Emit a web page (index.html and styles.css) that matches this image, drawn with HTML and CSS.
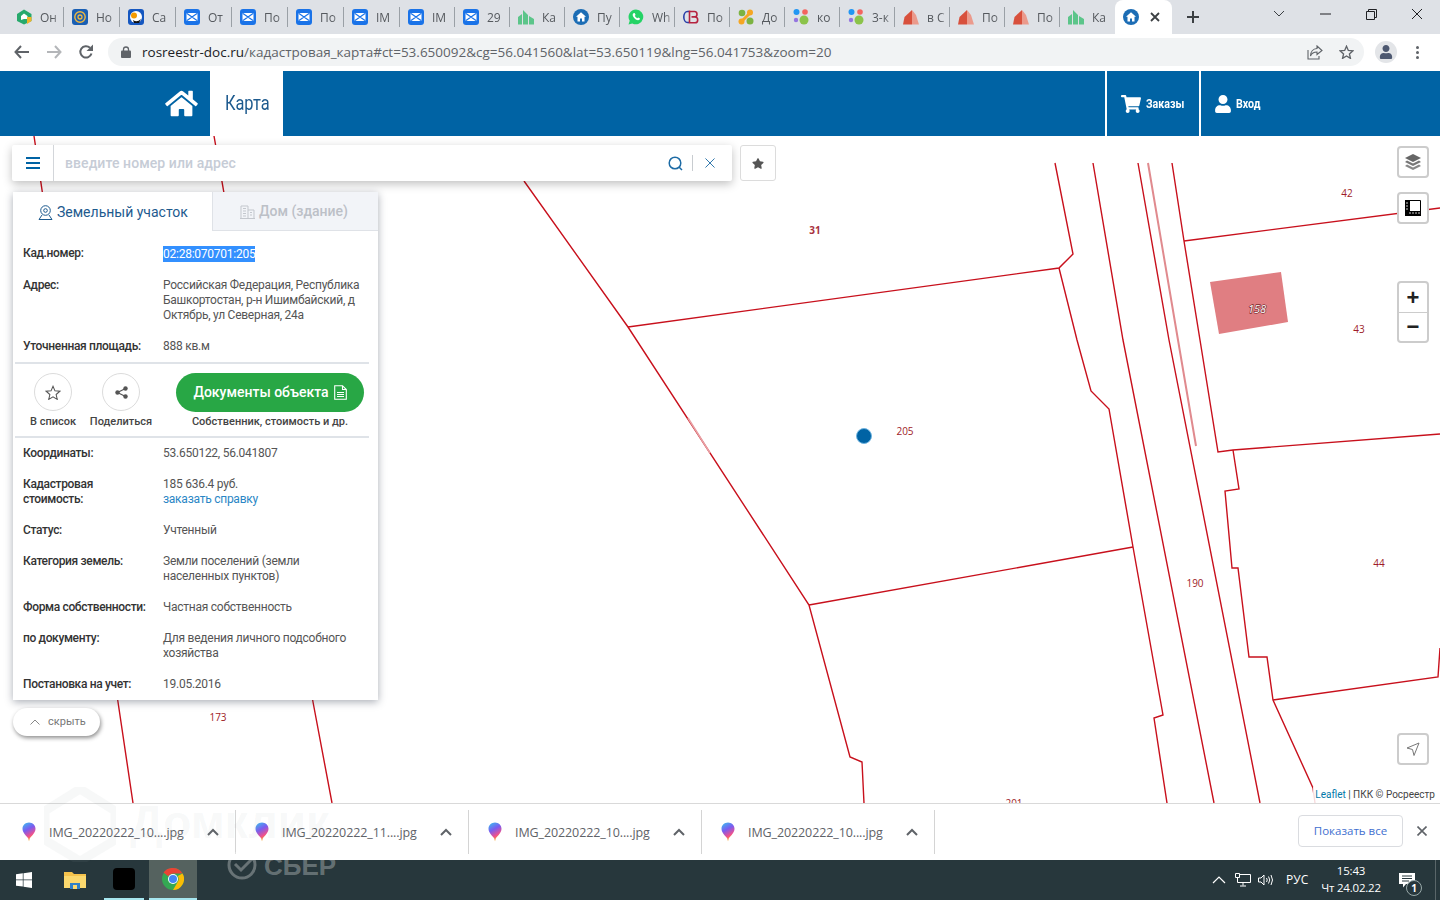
FILE: index.html
```html
<!DOCTYPE html>
<html lang="ru">
<head>
<meta charset="utf-8">
<title>Кадастровая карта</title>
<link rel="stylesheet" href="styles.css">
</head>
<body>
<svg class="defs" width="0" height="0" aria-hidden="true">
  <defs>
    <linearGradient id="balloon" x1="0" y1="0" x2="0.4" y2="1">
      <stop offset="0" stop-color="#35c6f0"/><stop offset="0.45" stop-color="#7a5cf0"/><stop offset="0.8" stop-color="#f0508c"/><stop offset="1" stop-color="#f7a020"/>
    </linearGradient>
    <symbol id="f-dom" viewBox="0 0 16 16"><path d="M8 0.5 15.5 5v7L8 15.5 1 12V5z" fill="#27a96c"/><path d="M8 4.5 11.5 7v3H8L5 11V7z" fill="#fff"/><path d="M11 8h4.5v4L11 15z" fill="#f0b429"/></symbol>
    <symbol id="f-at" viewBox="0 0 16 16"><rect width="16" height="16" rx="3" fill="#1a5fb4"/><circle cx="8" cy="8" r="5.2" fill="none" stroke="#f0b840" stroke-width="1.4"/><circle cx="8" cy="8" r="2" fill="none" stroke="#f0b840" stroke-width="1.3"/></symbol>
    <symbol id="f-sa" viewBox="0 0 16 16"><rect width="16" height="16" rx="3" fill="#1557c0"/><circle cx="8" cy="8" r="6" fill="#fff"/><circle cx="6" cy="6.5" r="3" fill="#f59b00"/><path d="M5 11q4 3 8-1l-2 4H6z" fill="#111"/></symbol>
    <symbol id="f-mail" viewBox="0 0 16 16"><rect width="16" height="16" rx="3" fill="#1a73e8"/><rect x="2.5" y="4" width="11" height="8" rx="1" fill="#fff"/><path d="M3 4.5 8 8l5-3.500M3 11.500 8 8l5 3.500" fill="none" stroke="#1a73e8" stroke-width="1.200"/></symbol>
    <symbol id="f-bld" viewBox="0 0 16 16"><path d="M0 15.500V8l4-3v10.500zM5 15.500V1l5 5v9.500zM11 15.500V7l5 3v5.500z" fill="#5cc58a"/></symbol>
    <symbol id="f-home" viewBox="0 0 16 16"><circle cx="8" cy="8" r="8" fill="#1c6db5"/><path d="M8 3.200 13 7.800h-1.500V12.500h-2.500v-3H7v3H4.500V7.800H3z" fill="#fff"/></symbol>
    <symbol id="f-wa" viewBox="0 0 16 16"><path d="M8 0.500a7.400 7.400 0 0 0-6.300 11.300L0.500 15.500l3.800-1.100A7.400 7.400 0 1 0 8 0.500z" fill="#25d366"/><path d="M5.400 4.200c-1 .9-1 2.400.2 4 1.300 1.800 3 3 4.500 3 1 0 1.900-.8 1.900-1.700l-1.800-1-.9.800c-1-.4-2-1.400-2.500-2.500l.8-.9-.9-1.900z" fill="#fff"/></symbol>
    <symbol id="f-cb" viewBox="0 0 16 16"><path d="M6 2.500H4.500a3.700 5.500 0 0 0 0 11H6" fill="none" stroke="#2a3fa8" stroke-width="1.600"/><path d="M6.500 1.500v13M6.500 2.500h5a2.500 2.700 0 0 1 0 5.400h-3M8.500 8h3.500a2.700 2.900 0 0 1 0 5.800H6.500" fill="none" stroke="#b5223f" stroke-width="1.600"/></symbol>
    <symbol id="f-do" viewBox="0 0 16 16"><path d="M4 12 12 4" stroke="#f5a623" stroke-width="3"/><circle cx="4" cy="4" r="3.300" fill="#7cb342"/><circle cx="12" cy="3.500" r="3" fill="#f5a623"/><circle cx="3.500" cy="12.500" r="3" fill="#f5a623"/><circle cx="12" cy="12" r="3.500" fill="#7cb342"/></symbol>
    <symbol id="f-dots" viewBox="0 0 16 16"><circle cx="3.500" cy="3" r="3" fill="#2196f3"/><circle cx="12" cy="3" r="2.800" fill="#f4645f"/><circle cx="3" cy="11" r="2.200" fill="#9575e0"/><circle cx="11" cy="11" r="4.500" fill="#8bc34a"/></symbol>
    <symbol id="f-red" viewBox="0 0 16 16"><path d="M0 15.500 1.500 8 9 1v14.500z" fill="#d8503c"/><path d="M9 1l4 5 3 9.500H9z" fill="#eb9a8c"/></symbol>
    <symbol id="star" viewBox="0 0 576 512"><path d="M259.300 17.800 194 150.200 47.900 171.500c-26.200 3.800-36.700 36.100-17.700 54.600l105.700 103-25 145.500c-4.500 26.300 23.200 46 46.400 33.700L288 439.600l130.700 68.700c23.200 12.200 50.900-7.400 46.400-33.700l-25-145.500 105.700-103c19-18.500 8.500-50.800-17.700-54.600L382 150.200 316.700 17.800c-11.700-23.600-45.600-23.900-57.400 0z"/></symbol>
    <symbol id="chev" viewBox="0 0 16 16"><path d="M3 11 8 6l5 5" fill="none" stroke="#5f6368" stroke-width="2"/></symbol>
    <symbol id="dl" viewBox="0 0 14 20"><path d="M7 0.500c3.600 0 6.500 2.800 6.500 6.300 0 4-3.700 7-5.700 9.500l-.8 3-.8-3C4.200 13.800.5 10.800.5 6.800.5 3.300 3.400.5 7 .5z" fill="url(#balloon)"/></symbol>
  </defs>
</svg>

<div class="tabstrip">
  <div class="tab"><svg class="fav"><use href="#f-dom"/></svg><span class="tab-t">Он</span></div>
  <div class="tab"><svg class="fav"><use href="#f-at"/></svg><span class="tab-t">Но</span></div>
  <div class="tab"><svg class="fav"><use href="#f-sa"/></svg><span class="tab-t">Са</span></div>
  <div class="tab"><svg class="fav"><use href="#f-mail"/></svg><span class="tab-t">От</span></div>
  <div class="tab"><svg class="fav"><use href="#f-mail"/></svg><span class="tab-t">По</span></div>
  <div class="tab"><svg class="fav"><use href="#f-mail"/></svg><span class="tab-t">По</span></div>
  <div class="tab"><svg class="fav"><use href="#f-mail"/></svg><span class="tab-t">IM</span></div>
  <div class="tab"><svg class="fav"><use href="#f-mail"/></svg><span class="tab-t">IM</span></div>
  <div class="tab"><svg class="fav"><use href="#f-mail"/></svg><span class="tab-t">29</span></div>
  <div class="tab"><svg class="fav"><use href="#f-bld"/></svg><span class="tab-t">Ка</span></div>
  <div class="tab"><svg class="fav"><use href="#f-home"/></svg><span class="tab-t">Пу</span></div>
  <div class="tab"><svg class="fav"><use href="#f-wa"/></svg><span class="tab-t">Wh</span></div>
  <div class="tab"><svg class="fav"><use href="#f-cb"/></svg><span class="tab-t">По</span></div>
  <div class="tab"><svg class="fav"><use href="#f-do"/></svg><span class="tab-t">До</span></div>
  <div class="tab"><svg class="fav"><use href="#f-dots"/></svg><span class="tab-t">ко</span></div>
  <div class="tab"><svg class="fav"><use href="#f-dots"/></svg><span class="tab-t">3-к</span></div>
  <div class="tab"><svg class="fav"><use href="#f-red"/></svg><span class="tab-t">в С</span></div>
  <div class="tab"><svg class="fav"><use href="#f-red"/></svg><span class="tab-t">По</span></div>
  <div class="tab"><svg class="fav"><use href="#f-red"/></svg><span class="tab-t">По</span></div>
  <div class="tab tab-last"><svg class="fav"><use href="#f-bld"/></svg><span class="tab-t">Ка</span></div>
  <div class="tab-active">
    <svg class="fav"><use href="#f-home"/></svg>
    <svg class="tab-x" viewBox="0 0 10 10"><path d="M1 1l8 8M9 1l-8 8" stroke="#3c4043" stroke-width="1.800"/></svg>
  </div>
  <svg class="newtab" viewBox="0 0 14 14"><path d="M7 1v12M1 7h12" stroke="#3c4043" stroke-width="2"/></svg>
  <div class="winctl">
    <div class="winbtn"><svg width="12" height="8" viewBox="0 0 12 8"><path d="M1 1l5 5 5-5" fill="none" stroke="#3c4043"/></svg></div>
    <div class="winbtn"><svg width="11" height="2" viewBox="0 0 11 2"><path d="M0 1h11" stroke="#202124"/></svg></div>
    <div class="winbtn"><svg width="11" height="11" viewBox="0 0 11 11"><path d="M.5 2.500h8v8h-8zM2.500 2.500v-2h8v8h-2" fill="none" stroke="#202124"/></svg></div>
    <div class="winbtn"><svg width="12" height="12" viewBox="0 0 12 12"><path d="M1 1l10 10M11 1 1 11" stroke="#202124"/></svg></div>
  </div>
</div>

<div class="toolbar">
  <div class="navbtn"><svg width="16" height="14" viewBox="0 0 16 14"><path d="M7 1 1.500 7 7 13M1.500 7H15" fill="none" stroke="#5f6368" stroke-width="2"/></svg></div>
  <div class="navbtn"><svg width="16" height="14" viewBox="0 0 16 14"><path d="M9 1l5.500 6L9 13M14.500 7H1" fill="none" stroke="#b4b6b9" stroke-width="2"/></svg></div>
  <div class="navbtn"><svg width="16" height="16" viewBox="0 0 16 16"><path d="M13.500 9.500A5.700 5.700 0 1 1 12 3.800" fill="none" stroke="#5f6368" stroke-width="2"/><path d="M15 0.500V7H8.500z" fill="#5f6368"/></svg></div>
  <div class="omnibox">
    <svg class="lock" width="10" height="12" viewBox="0 0 10 12"><path d="M2.500 5V3.500a2.500 2.500 0 0 1 5 0V5" fill="none" stroke="#5f6368" stroke-width="1.300"/><rect y="4.500" width="10" height="7.500" rx="1" fill="#5f6368"/></svg>
    <span class="url"><span class="url-host">rosreestr-doc.ru</span>/кадастровая_карта#ct=53.650092&amp;cg=56.041560&amp;lat=53.650119&amp;lng=56.041753&amp;zoom=20</span>
    <svg class="omni-ic" width="16" height="15" viewBox="0 0 16 15"><path d="M10 1l5 4.500L10 9.500V7C6.500 7 4.500 8.500 3.500 11 3.500 7 6 3.800 10 3.500zM1 5v9h11v-3" fill="none" stroke="#5f6368" stroke-width="1.100"/></svg>
    <svg class="omni-ic omni-star" width="15" height="14" viewBox="0 0 24 23"><path d="M12 2l3 7 7.500.6-5.700 5 1.700 7.400L12 18l-6.500 4 1.700-7.400-5.700-5L9 9z" fill="none" stroke="#5f6368" stroke-width="2.200"/></svg>
  </div>
  <div class="avatar"><svg width="14" height="14" viewBox="0 0 448 512"><path fill="#4d5870" d="M224 256c70.700 0 128-57.300 128-128S294.700 0 224 0 96 57.300 96 128s57.300 128 128 128zm89.600 32h-16.700c-22.200 10.200-46.900 16-72.900 16s-50.600-5.800-72.900-16h-16.700C60.200 288 0 348.200 0 422.400V464c0 26.500 21.500 48 48 48h352c26.500 0 48-21.500 48-48v-41.600c0-74.200-60.200-134.400-134.400-134.400z"/></svg></div>
  <div class="kebab"><i></i><i></i><i></i></div>
</div>

<header class="site">
  <svg class="site-home" width="33" height="29" viewBox="0 0 576 512"><path fill="#fff" d="M280.370 148.260L96 300.110V464a16 16 0 0 0 16 16l112.060-.29a16 16 0 0 0 15.920-16V368a16 16 0 0 1 16-16h64a16 16 0 0 1 16 16v95.640a16 16 0 0 0 16 16.050L464 480a16 16 0 0 0 16-16V300L295.670 148.260a12.190 12.190 0 0 0-15.300 0zM571.600 251.470L488 182.560V44.050a12 12 0 0 0-12-12h-56a12 12 0 0 0-12 12v72.610L318.470 43a48 48 0 0 0-61 0L4.340 251.470a12 12 0 0 0-1.600 16.900l25.500 31A12 12 0 0 0 45.150 301l235.220-193.740a12.190 12.190 0 0 1 15.300 0L530.900 301a12 12 0 0 0 16.900-1.600l25.500-31a12 12 0 0 0-1.700-16.930z"/></svg>
  <div class="site-tab"><span class="site-tab-t">Карта</span></div>
  <div class="site-right">
    <div class="site-link site-orders">
      <svg width="20" height="18" viewBox="0 0 576 512"><path fill="#fff" d="M528.120 301.319l47.273-208C578.806 78.301 567.391 64 551.990 64H159.208l-9.166-44.810C147.758 8.021 137.930 0 126.529 0H24C10.745 0 0 10.745 0 24v16c0 13.255 10.745 24 24 24h69.883l70.248 343.435C147.325 417.100 136 435.222 136 456c0 30.928 25.072 56 56 56s56-25.072 56-56c0-15.674-6.447-29.835-16.824-40h209.647C430.447 426.165 424 440.326 424 456c0 30.928 25.072 56 56 56s56-25.072 56-56c0-22.172-12.888-41.332-31.579-50.405l5.517-24.276c3.413-15.018-8.002-29.319-23.403-29.319H218.117l-6.545-32h293.145c11.206 0 20.920-7.754 23.403-18.681z"/></svg>
      <span class="site-link-t">Заказы</span>
    </div>
    <div class="site-link site-login">
      <svg width="16" height="18" viewBox="0 0 448 512"><path fill="#fff" d="M224 256c70.700 0 128-57.300 128-128S294.700 0 224 0 96 57.300 96 128s57.300 128 128 128zm89.600 32h-16.700c-22.200 10.200-46.900 16-72.900 16s-50.600-5.800-72.900-16h-16.700C60.200 288 0 348.200 0 422.400V464c0 26.500 21.500 48 48 48h352c26.500 0 48-21.500 48-48v-41.600c0-74.200-60.200-134.400-134.400-134.400z"/></svg>
      <span class="site-link-t">Вход</span>
    </div>
  </div>
</header>

<main class="map">
  <svg class="plan" viewBox="0 136 1440 667" width="1440" height="667">
    <g class="ln">
      <path d="M34 136 118 702 133 803"/>
      <path d="M214 136 313 702 332 803"/>
      <path d="M524 181 628 327 809 605 850 757 862 762 864 803"/>
      <path d="M628 327 1059 268 1073 254 1055 163"/>
      <path d="M1059 268 1077 340 1091 391 1109 409 1133 547 1163 715 1154 718 1167 803"/>
      <path d="M809 605 1133 547"/>
      <path d="M1093 163 1123 340 1214 803"/>
      <path d="M1138 163 1169 340 1260 803"/>
      <path d="M1172 163 1184 241 1200 340 1218 452 1233 450 1440 434"/>
      <path d="M1184 241 1440 208"/>
      <path d="M1233 450 1239 489 1225 491 1232 568 1238 568 1249 657 1267 657 1273 700 1313 788 1315 803"/>
      <path d="M1273 700 1438 677 1440 648"/>
    </g>
    <path class="ln-fade" d="M688 418 710 453"/>
    <path class="ln-pale" d="M1148 163 1178 340 1196 446"/>
    <polygon class="bld" points="1210,282 1281,272 1288,322 1219,334"/>
    <g class="lbl">
      <text x="815" y="234" class="lbl-b">31</text>
      <text x="1347" y="197">42</text>
      <text x="1359" y="333">43</text>
      <text x="1379" y="567">44</text>
      <text x="1195" y="587">190</text>
      <text x="905" y="435">205</text>
      <text x="218" y="721">173</text>
      <text x="1014" y="807">201</text>
      <text x="1257" y="313" class="lbl-w">158</text>
    </g>
    <circle class="dot" cx="864" cy="436" r="7.500"/>
  </svg>

  <div class="search">
    <div class="search-menu"><i></i><i></i><i></i></div>
    <div class="search-ph">введите номер или адрес</div>
    <svg class="search-ic" width="15" height="15" viewBox="0 0 15 15"><circle cx="7" cy="7" r="5.800" fill="none" stroke="#1d6ba5" stroke-width="1.500"/><path d="M11 11l3 3" stroke="#1d6ba5" stroke-width="1.500"/></svg>
    <span class="search-sep"></span>
    <svg class="search-x" width="10" height="10" viewBox="0 0 11 11"><path d="M.5.500l10 10M10.500.500l-10 10" stroke="#1d6ba5"/></svg>
  </div>
  <div class="fav-btn"><svg width="12" height="11"><use href="#star" fill="#555"/></svg></div>

  <section class="panel">
    <div class="p-tabs">
      <div class="p-tab p-tab-on">
        <svg width="15" height="15" viewBox="0 0 15 15"><circle cx="7.500" cy="5.500" r="4.800" fill="none" stroke="#1d5a8e"/><circle cx="7.500" cy="5.500" r="1.800" fill="none" stroke="#1d5a8e"/><path d="M4 10 1 14.500h13L11 10" fill="none" stroke="#1d5a8e"/></svg>
        Земельный участок
      </div>
      <div class="p-tab p-tab-off">
        <svg width="15" height="14" viewBox="0 0 15 14"><path d="M1 13.500V1h7v12.500zM8 5h6v8.500M0 13.500h15M3 3.500h3M3 6h3M3 8.500h3M3 11h3M10 7.500h2M10 10h2" fill="none" stroke="#c3c7cd"/></svg>
        Дом (здание)
      </div>
    </div>
    <div class="p-sec p-sec-first">
      <div class="rw"><div class="k">Кад.номер:</div><div class="v"><span class="sel">02:28:070701:205</span></div></div>
      <div class="rw"><div class="k">Адрес:</div><div class="v">Российская Федерация, Республика Башкортостан, р-н Ишимбайский, д Октябрь, ул Северная, 24а</div></div>
      <div class="rw rw-end"><div class="k">Уточненная площадь:</div><div class="v">888 кв.м</div></div>
    </div>
    <div class="p-actions">
      <div class="act">
        <div class="act-c"><svg width="16" height="15" viewBox="0 0 24 23"><path d="M12 2l3 7 7.500.6-5.700 5 1.700 7.400L12 18l-6.500 4 1.700-7.400-5.700-5L9 9z" fill="none" stroke="#555" stroke-width="1.600"/></svg></div>
        <div class="act-l">В список</div>
      </div>
      <div class="act">
        <div class="act-c"><svg width="13" height="13" viewBox="0 0 13 13"><path d="M10.500 2.500 2.500 6.500l8 4" fill="none" stroke="#555" stroke-width="1.200"/><circle cx="10.500" cy="2.500" r="2.200" fill="#555"/><circle cx="2.500" cy="6.500" r="2.200" fill="#555"/><circle cx="10.500" cy="10.500" r="2.200" fill="#555"/></svg></div>
        <div class="act-l">Поделиться</div>
      </div>
      <div class="act-main">
        <div class="docs">Документы объекта
          <svg width="13" height="15" viewBox="0 0 13 15"><path d="M.7.700h7.800l3.800 3.800v9.800H.7zM8.500.700v3.800h3.800M3 7.500h7M3 9.500h7M3 11.500h7" fill="none" stroke="#fff" stroke-width="1.100"/></svg>
        </div>
        <div class="docs-sub">Собственник, стоимость и др.</div>
      </div>
    </div>
    <div class="p-sec p-sec-last">
      <div class="rw"><div class="k">Координаты:</div><div class="v">53.650122, 56.041807</div></div>
      <div class="rw"><div class="k">Кадастровая стоимость:</div><div class="v">185 636.4 руб.<br><span class="link">заказать справку</span></div></div>
      <div class="rw"><div class="k">Статус:</div><div class="v">Учтенный</div></div>
      <div class="rw"><div class="k">Категория земель:</div><div class="v">Земли поселений (земли населенных пунктов)</div></div>
      <div class="rw"><div class="k">Форма собственности:</div><div class="v">Частная собственность</div></div>
      <div class="rw"><div class="k">по документу:</div><div class="v">Для ведения личного подсобного хозяйства</div></div>
      <div class="rw rw-end"><div class="k">Постановка на учет:</div><div class="v">19.05.2016</div></div>
    </div>
  </section>

  <div class="hide-btn"><svg width="10" height="6" viewBox="0 0 10 6"><path d="M.5 5.500 5 1l4.500 4.500" fill="none" stroke="#888"/></svg><span>скрыть</span></div>

  <div class="ctl ctl-layers"><svg width="16" height="16" viewBox="0 0 16 16"><path d="M8 0 16 4 8 8 0 4z" fill="#666"/><path d="M2 6.500 0 8l8 4 8-4-2-1.500L8 9.500z" fill="#777"/><path d="M2 10.500 0 12l8 4 8-4-2-1.500L8 13.500z" fill="#888"/></svg></div>
  <div class="ctl ctl-ruler"><svg width="16" height="16" viewBox="0 0 16 16"><path d="M0 0h5v11h11v5H0z" fill="#000"/><path d="M5 .500h10.500V11" fill="none" stroke="#000"/><path d="M1 3h3M1 6h3M1 9h3M5 12v3M8 12v3M11 12v3M14 12v3" stroke="#fff" stroke-width=".8" stroke-dasharray="2 1"/></svg></div>
  <div class="ctl-zoom">
    <div class="zbtn">+</div>
    <div class="zbtn">−</div>
  </div>
  <div class="ctl ctl-nav"><svg width="14" height="14" viewBox="0 0 14 14"><path d="M13 1 1 6l5.500 1.500L8 13.500z" fill="none" stroke="#777"/></svg></div>
  <div class="attr"><span class="attr-l">Leaflet</span> | ПКК © Росреестр</div>
</main>

<footer class="downloads">
  <div class="dl-item"><svg class="dl-ic"><use href="#dl"/></svg><span class="dl-t">IMG_20220222_10....jpg</span><svg class="dl-ch"><use href="#chev"/></svg></div>
  <div class="dl-item"><svg class="dl-ic"><use href="#dl"/></svg><span class="dl-t">IMG_20220222_11....jpg</span><svg class="dl-ch"><use href="#chev"/></svg></div>
  <div class="dl-item"><svg class="dl-ic"><use href="#dl"/></svg><span class="dl-t">IMG_20220222_10....jpg</span><svg class="dl-ch"><use href="#chev"/></svg></div>
  <div class="dl-item"><svg class="dl-ic"><use href="#dl"/></svg><span class="dl-t">IMG_20220222_10....jpg</span><svg class="dl-ch"><use href="#chev"/></svg></div>
  <div class="dl-all">Показать все</div>
  <svg class="dl-x" width="10" height="10" viewBox="0 0 10 10"><path d="M.5.500l9 9M9.500.500l-9 9" stroke="#5f6368" stroke-width="1.600"/></svg>
</footer>

<footer class="taskbar">
  <svg class="tb-win" width="16" height="16" viewBox="0 0 16 16"><path fill="#fff" d="M0 2.300 6.800 1.300v6.200H0zM7.500 1.200 16 0v7.500H7.500zM0 8.300h6.800v6.300L0 13.700zM7.500 8.300H16V16l-8.500-1.200z"/></svg>
  <div class="tb-cell tb-exp"><svg width="22" height="20" viewBox="0 0 22 20"><path d="M0 2h8l2 2h12v14H0z" fill="#f5c24c"/><path d="M0 6h22v12H0z" fill="#fbd86e"/><path d="M6 13h10v6H6z" fill="#2f80c8"/><path d="M9 15h4v4H9z" fill="#fbd86e"/></svg></div>
  <div class="tb-cell tb-app tb-on"><span class="tb-black"></span></div>
  <div class="tb-cell tb-chrome tb-on">
    <svg width="22" height="22" viewBox="0 0 22 22"><circle cx="11" cy="11" r="11" fill="#34a853"/><path d="M11 0a11 11 0 0 1 9.530 5.500H11a5.500 5.500 0 0 0-4.800 2.800L1.500 4.500A11 11 0 0 1 11 0z" fill="#ea4335"/><path d="M20.530 5.500A11 11 0 0 1 11 22l4.800-8.200A5.500 5.500 0 0 0 15.800 8z" fill="#fbbc05"/><circle cx="11" cy="11" r="5" fill="#fff"/><circle cx="11" cy="11" r="4" fill="#4285f4"/></svg>
  </div>
  <div class="tray">
    <svg class="tray-chev" width="14" height="8" viewBox="0 0 14 8"><path d="M1 7l6-6 6 6" fill="none" stroke="#fff" stroke-width="1.200"/></svg>
    <svg class="tray-net" width="16" height="14" viewBox="0 0 16 14"><path d="M.5.500h4v4h-4zM4.500 1.500h11v8h-13v-5M8 9.500v3M5 13h6" fill="none" stroke="#fff"/></svg>
    <svg class="tray-snd" width="16" height="12" viewBox="0 0 16 12"><path d="M.5 4h2.500l3-3v10l-3-3H.5zM8.500 4q1.500 2 0 4M10.500 2.500q2.500 3.500 0 7M13 1q3 5 0 10" fill="none" stroke="#fff"/></svg>
    <span class="tray-lang">РУС</span>
    <div class="tray-clock"><div>15:43</div><div>Чт 24.02.22</div></div>
    <div class="tray-note">
      <svg width="16" height="15" viewBox="0 0 16 15"><path fill="#fff" d="M0 0h16v11h-9l-3 3.500V11H0z"/><path d="M3 3h10M3 5.500h10M3 8h7" stroke="#28383d"/></svg>
      <span class="tray-badge">1</span>
    </div>
  </div>
</footer>

<div class="wm">
  <svg class="wm-house" width="72" height="75" viewBox="0 0 72 75"><path d="M36 2 71 24v29L36 74 1 53V24z" fill="none" stroke="currentColor" stroke-width="9"/></svg>
  <span class="wm-dom">Домклик</span>
  <svg class="wm-check" width="30" height="30" viewBox="0 0 30 30"><circle cx="15" cy="15" r="13" fill="none" stroke="currentColor" stroke-width="3"/><path d="M8 14l6 6L28 6" fill="none" stroke="currentColor" stroke-width="3"/></svg>
  <span class="wm-sber">СБЕР</span>
</div>
</body>
</html>
```
FILE: styles.css
```css
* { box-sizing: border-box; }
html, body { margin: 0; padding: 0; }
body {
  position: relative;
  width: 1440px;
  height: 900px;
  overflow: hidden;
  display: flex;
  flex-direction: column;
  font-family: Roboto, "Liberation Sans", sans-serif;
  background: #fff;
}
.defs { position: absolute; }

/* Browser tab strip */
.tabstrip {
  height: 34px;
  flex: none;
  display: flex;
  align-items: stretch;
  padding-left: 8px;
  background: #dee1e6;
  font-family: "Open Sans", "Noto Sans", sans-serif;
  font-size: 12px;
  color: #55595e;
}
.tab {
  width: 55px;
  display: flex;
  align-items: center;
  gap: 8px;
  padding-left: 8px;
  position: relative;
}
.tab:nth-child(-n+7) { width: 56px; }
.tab::after {
  content: "";
  position: absolute;
  right: 0;
  top: 7px;
  height: 20px;
  width: 1px;
  background: #9aa0a6;
}
.tab-last::after { display: none; }
.fav { width: 16px; height: 16px; flex: none; }
.tab-t {
  width: 21px;
  overflow: hidden;
  white-space: nowrap;
  -webkit-mask-image: linear-gradient(90deg, #000 60%, rgba(0,0,0,.25));
  mask-image: linear-gradient(90deg, #000 60%, rgba(0,0,0,.25));
}
.tab-active {
  width: 57px;
  background: #fff;
  border-radius: 8px 8px 0 0;
  display: flex;
  align-items: center;
  padding-left: 8px;
  gap: 11px;
}
.tab-x { width: 10px; height: 10px; }
.newtab { width: 14px; height: 14px; align-self: center; margin-left: 14px; }
.winctl { margin-left: auto; display: flex; }
.winbtn {
  width: 46px;
  height: 28px;
  display: flex;
  align-items: center;
  justify-content: center;
}

/* Browser toolbar */
.toolbar {
  height: 37px;
  flex: none;
  display: flex;
  align-items: flex-start;
  padding: 4px 0 0 6px;
  background: #fff;
}
.navbtn {
  width: 32px;
  height: 28px;
  display: flex;
  align-items: center;
  justify-content: center;
}
.omnibox {
  width: 1256px;
  height: 28px;
  margin-left: 6px;
  display: flex;
  align-items: center;
  padding: 0 10px 0 13px;
  border-radius: 14px;
  background: #f1f3f4;
}
.lock { flex: none; }
.url {
  margin-left: 11px;
  font-family: "Open Sans", "Noto Sans", sans-serif;
  font-size: 13.5px;
  color: #5f6368;
  white-space: nowrap;
}
.url-host { color: #202124; }
.omni-ic { flex: none; margin-left: auto; }
.omni-star { margin-left: 16px; }
.avatar {
  width: 22px;
  height: 22px;
  margin: 3px 0 0 11px;
  border-radius: 50%;
  background: #e3e5e8;
  display: flex;
  align-items: center;
  justify-content: center;
}
.kebab {
  margin: 8px 0 0 19px;
  width: 4px;
  display: flex;
  flex-direction: column;
  gap: 2px;
}
.kebab i { width: 3px; height: 3px; border-radius: 50%; background: #5f6368; }

/* Site header */
.site {
  height: 65px;
  flex: none;
  display: flex;
  align-items: stretch;
  padding-left: 165px;
  background: #0063a4;
}
.site-home { align-self: center; }
.site-tab {
  width: 73px;
  margin-left: 12px;
  padding: 0 0 2px 2px;
  display: flex;
  align-items: center;
  justify-content: center;
  background: #fff;
  color: #1d5a8e;
  font-size: 20px;
}
.site-tab-t { display: inline-block; transform: scaleX(.82); }
.site-right { margin-left: 822px; display: flex; }
.site-link {
  display: flex;
  align-items: center;
  gap: 5px;
  border-left: 2px solid #fff;
  color: #fff;
  font-weight: 700;
  font-size: 13px;
}
.site-link-t { display: inline-block; transform: scaleX(.82); transform-origin: left center; }
.site-orders { width: 94px; padding-left: 14px; }
.site-login { padding-left: 14px; }

/* Map */
.map {
  position: relative;
  flex: 1;
  min-height: 0;
  overflow: hidden;
  background: #fff;
}
.plan { position: absolute; left: 0; top: 0; display: block; }
.ln path { fill: none; stroke: #c8101c; stroke-width: 1.400; }
.ln-fade { fill: none; stroke: #e8a0a4; stroke-width: 1.600; }
.ln-pale { fill: none; stroke: #e08a8e; stroke-width: 2; }
.bld { fill: #e07e82; }
.lbl text {
  font-family: "Open Sans", "Noto Sans", sans-serif;
  font-size: 10px;
  fill: #9e1c28;
  text-anchor: middle;
}
.lbl .lbl-b { font-weight: 700; fill: #a8323e; }
.lbl .lbl-w {
  fill: #fff;
  font-style: italic;
  font-size: 11px;
  stroke: #7a2a30;
  stroke-width: 1.300px;
  paint-order: stroke;
}
.dot { fill: #0063a4; stroke: #6fb4e0; stroke-width: 1; }

/* Search */
.search {
  position: absolute;
  left: 12px;
  top: 9px;
  width: 720px;
  height: 36px;
  display: flex;
  align-items: center;
  background: #fff;
  border-radius: 2px;
  box-shadow: 0 3px 10px rgba(0,0,0,.25);
}
.search-menu {
  width: 42px;
  height: 36px;
  border-right: 1px solid #d3d6da;
  display: flex;
  flex-direction: column;
  align-items: center;
  justify-content: center;
  gap: 3px;
}
.search-menu i { width: 14px; height: 2px; background: #0063a4; }
.search-ph {
  margin-left: 11px;
  width: 603px;
  color: #c6ccd6;
  font-size: 14px;
  font-weight: 500;
  letter-spacing: .08px;
}
.search-sep { width: 1px; height: 16px; margin: 0 12px 0 9px; background: #c8ccd0; }
.fav-btn {
  position: absolute;
  left: 740px;
  top: 9px;
  width: 36px;
  height: 36px;
  display: flex;
  align-items: center;
  justify-content: center;
  background: #fff;
  border: 1px solid #dcdcdc;
  border-radius: 3px;
}

/* Info panel */
.panel {
  position: absolute;
  left: 13px;
  top: 56px;
  width: 365px;
  height: 508px;
  background: #fff;
  box-shadow: 0 2px 8px rgba(40,50,70,.4);
  font-size: 12px;
  line-height: 15px;
}
.p-tabs { display: flex; height: 39px; }
.p-tab {
  display: flex;
  align-items: center;
  gap: 4px;
  padding-top: 1px;
  font-size: 14px;
}
.p-tab-on { width: 199px; padding-left: 25px; color: #1d5a8e; }
.p-tab-off {
  flex: 1;
  padding-left: 27px;
  color: #bcc0c7;
  font-weight: 500;
  background: #f2f4f8;
  border-left: 1px solid #dfe2e7;
  border-bottom: 1px solid #dfe2e7;
}
.p-sec { margin: 0 9px 0 2px; padding-left: 8px; }
.p-sec-first { padding-top: 15px; padding-bottom: 8px; border-bottom: 2px solid #dfe3e8; }
.p-sec-last { padding-top: 8px; }
.rw { display: grid; grid-template-columns: 140px 1fr; padding-bottom: 16px; }
.rw-end { padding-bottom: 0; }
.k { padding-right: 10px; color: #333; font-weight: 500; letter-spacing: -.35px; }
.v { padding-right: 8px; color: #555; letter-spacing: -.25px; }
.sel { display: inline-block; background: #3390ff; color: #fff; line-height: 16px; }
.link { color: #2a86c5; }
.p-actions {
  margin: 0 9px 0 2px;
  height: 74px;
  padding: 9px 0 0 4px;
  display: flex;
  border-bottom: 2px solid #dfe3e8;
}
.act { width: 68px; display: flex; flex-direction: column; align-items: center; }
.act-c {
  width: 38px;
  height: 38px;
  border: 1px solid #dcdcdc;
  border-radius: 50%;
  display: flex;
  align-items: center;
  justify-content: center;
}
.act-l { margin-top: 3px; font-size: 11px; font-weight: 500; color: #444; white-space: nowrap; }
.act-main { width: 188px; margin-left: 21px; text-align: center; }
.docs {
  height: 39px;
  border-radius: 20px;
  display: flex;
  align-items: center;
  justify-content: center;
  gap: 5px;
  background: #28a745;
  color: #fff;
  font-size: 14px;
  font-weight: 500;
}
.docs-sub { margin-top: 2px; font-size: 11px; font-weight: 500; color: #444; white-space: nowrap; }

.hide-btn {
  position: absolute;
  left: 13px;
  top: 572px;
  width: 87px;
  height: 28px;
  display: flex;
  align-items: center;
  gap: 8px;
  padding: 0 0 1px 17px;
  border-radius: 14px;
  background: #fff;
  color: #777;
  font-size: 11px;
  box-shadow: 1px 2px 4px rgba(0,0,0,.45);
}

/* Map controls */
.ctl {
  position: absolute;
  left: 1397px;
  width: 32px;
  height: 32px;
  display: flex;
  align-items: center;
  justify-content: center;
  background: #fff;
  border: 2px solid #ccc;
  border-radius: 4px;
}
.ctl-layers { top: 10px; }
.ctl-ruler { top: 56px; }
.ctl-nav { top: 597px; }
.ctl-zoom {
  position: absolute;
  left: 1397px;
  top: 145px;
  width: 32px;
  height: 62px;
  background: #fff;
  border: 2px solid #ccc;
  border-radius: 4px;
}
.zbtn {
  height: 29px;
  display: flex;
  align-items: center;
  justify-content: center;
  font-family: "Liberation Sans", sans-serif;
  font-size: 22px;
  font-weight: 700;
  color: #222;
}
.zbtn + .zbtn { border-top: 1px solid #ccc; }
.attr {
  position: absolute;
  right: 0;
  bottom: 0;
  padding: 0 5px 0 2px;
  background: rgba(255,255,255,.85);
  font-size: 10px;
  line-height: 16px;
  color: #444;
}
.attr-l { color: #0078a8; }

/* Downloads */
.downloads {
  height: 57px;
  flex: none;
  display: flex;
  align-items: center;
  padding-left: 3px;
  border-top: 1px solid #d9d9d9;
  background: #fff;
  font-family: "Open Sans", "Noto Sans", sans-serif;
  font-size: 12.500px;
  color: #5f6368;
}
.dl-item {
  width: 233px;
  height: 44px;
  display: flex;
  align-items: center;
  padding-left: 19px;
  border-right: 1px solid #d4d4d4;
}
.dl-ic { width: 14px; height: 20px; flex: none; }
.dl-t { margin-left: 13px; width: 144px; white-space: nowrap; letter-spacing: -.1px; }
.dl-ch { width: 16px; height: 16px; margin-left: 12px; }
.dl-all {
  margin: 0 0 2px 363px;
  width: 105px;
  height: 32px;
  padding-bottom: 2px;
  display: flex;
  align-items: center;
  justify-content: center;
  border: 1px solid #dadce0;
  border-radius: 4px;
  color: #3f6fcf;
  font-size: 11.500px;
}
.dl-x { margin: 0 0 2px 14px; }

/* Taskbar */
.taskbar {
  height: 40px;
  flex: none;
  display: flex;
  align-items: center;
  padding-left: 16px;
  background: #27373c;
  color: #fff;
  font-family: "Open Sans", "Noto Sans", sans-serif;
  font-size: 12px;
}
.tb-cell {
  height: 40px;
  display: flex;
  align-items: center;
  justify-content: center;
}
.tb-exp { width: 40px; margin-left: 23px; }
.tb-app { width: 40px; margin-left: 9px; }
.tb-black { width: 22px; height: 22px; border-radius: 4px; background: #000; }
.tb-chrome { width: 48px; margin-left: 5px; background: #55625f; }
.tb-on { border-bottom: 2px solid #a6e6ef; }
.tray {
  margin: 0 4px 0 auto;
  display: flex;
  align-items: center;
  height: 40px;
  padding-right: 4px;
  border-right: 1px solid #5a6669;
}
.tray-net { margin-left: 9px; }
.tray-snd { margin-left: 7px; }
.tray-lang { margin-left: 12px; width: 27px; text-align: left; padding-bottom: 2px; }
.tray-clock {
  width: 60px;
  margin-left: 8px;
  padding-bottom: 2px;
  text-align: center;
  font-size: 11.500px;
  letter-spacing: -.2px;
  line-height: 17px;
  white-space: nowrap;
}
.tray-note {
  position: relative;
  width: 32px;
  height: 15px;
  margin-left: 18px;
  display: flex;
}
.tray-badge {
  position: absolute;
  left: 7px;
  top: 7px;
  width: 16px;
  height: 16px;
  display: flex;
  align-items: center;
  justify-content: center;
  border-radius: 50%;
  border: 1px solid #9aa;
  background: #27373c;
  font-size: 10px;
  font-weight: 700;
}

/* Watermark lying over the whole picture */
.wm {
  position: absolute;
  left: 0;
  top: 0;
  width: 1440px;
  height: 900px;
  pointer-events: none;
  color: rgba(150,160,165,.08);
}
.wm-house { position: absolute; left: 44px; top: 787px; }
.wm-dom {
  position: absolute;
  left: 130px;
  top: 796px;
  font-family: "Liberation Sans", sans-serif;
  font-size: 46px;
  font-weight: 700;
  line-height: 52px;
  white-space: nowrap;
}
.wm-check { position: absolute; left: 227px; top: 850px; color: rgba(255,255,255,.3); }
.wm-sber {
  position: absolute;
  left: 264px;
  top: 851px;
  color: rgba(255,255,255,.3);
  font-family: "Liberation Sans", sans-serif;
  font-size: 26px;
  font-weight: 700;
  line-height: 30px;
}
```
